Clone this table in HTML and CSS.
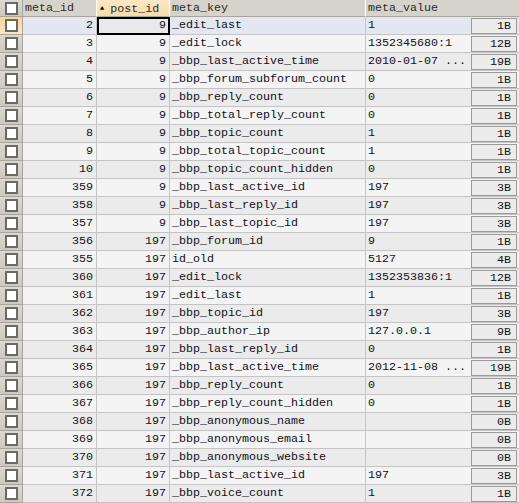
FILE: index.html
```html
<!DOCTYPE html>
<html>
<head>
<meta charset="utf-8">
<link rel="stylesheet" href="styles.css">
</head>
<body>
<div class="grid">
  <div class="row head">
    <div class="cb"><span class="box"></span></div>
    <div class="c">meta_id</div>
    <div class="c sorted"><span class="tri">&#9650;</span>post_id</div>
    <div class="c">meta_key</div>
    <div class="c">meta_value</div>
  </div>
  <div id="body"></div>
</div>
<script src="app.js"></script>
</body>
</html>
```

FILE: app.js
```js
const data = [
  [2,9,"_edit_last","1","1B"],
  [3,9,"_edit_lock","1352345680:1","12B"],
  [4,9,"_bbp_last_active_time","2010-01-07 ...","19B"],
  [5,9,"_bbp_forum_subforum_count","0","1B"],
  [6,9,"_bbp_reply_count","0","1B"],
  [7,9,"_bbp_total_reply_count","0","1B"],
  [8,9,"_bbp_topic_count","1","1B"],
  [9,9,"_bbp_total_topic_count","1","1B"],
  [10,9,"_bbp_topic_count_hidden","0","1B"],
  [359,9,"_bbp_last_active_id","197","3B"],
  [358,9,"_bbp_last_reply_id","197","3B"],
  [357,9,"_bbp_last_topic_id","197","3B"],
  [356,197,"_bbp_forum_id","9","1B"],
  [355,197,"id_old","5127","4B"],
  [360,197,"_edit_lock","1352353836:1","12B"],
  [361,197,"_edit_last","1","1B"],
  [362,197,"_bbp_topic_id","197","3B"],
  [363,197,"_bbp_author_ip","127.0.0.1","9B"],
  [364,197,"_bbp_last_reply_id","0","1B"],
  [365,197,"_bbp_last_active_time","2012-11-08 ...","19B"],
  [366,197,"_bbp_reply_count","0","1B"],
  [367,197,"_bbp_reply_count_hidden","0","1B"],
  [368,197,"_bbp_anonymous_name","","0B"],
  [369,197,"_bbp_anonymous_email","","0B"],
  [370,197,"_bbp_anonymous_website","","0B"],
  [371,197,"_bbp_last_active_id","197","3B"],
  [372,197,"_bbp_voice_count","1","1B"]
];
const body = document.getElementById("body");
data.forEach((r, i) => {
  const row = document.createElement("div");
  row.className = "row " + (i === 0 ? "sel" : (i % 2 ? "odd" : "even"));
  row.innerHTML =
    '<div class="cb"><span class="box"></span></div>' +
    '<div class="c num">' + r[0] + '</div>' +
    '<div class="c num' + (i === 0 ? ' focus' : '') + '">' + r[1] + '</div>' +
    '<div class="c">' + r[2] + '</div>' +
    '<div class="c val"><span class="vt">' + r[3] + '</span><span class="size">' + r[4] + '</span></div>';
  body.appendChild(row);
});
```

FILE: styles.css
```css
html, body {
  margin: 0;
  padding: 0;
  background: #ffffff;
}
.grid {
  width: 519px;
  font-family: "Liberation Mono", "DejaVu Sans Mono", monospace;
  font-size: 11.67px;
  color: #101020;
}
.row {
  display: grid;
  grid-template-columns: 23px 74px 73px 196px 153px;
  height: 18px;
}
.row.head {
  height: 17px;
  background: #d6d3ca;
}
.c {
  border-right: 1px solid #c4c4c4;
  border-bottom: 1px solid #c4c4c4;
  padding: 0 3px 0 2px;
  line-height: 17px;
  white-space: nowrap;
  overflow: hidden;
  position: relative;
}
.row.head .c {
  line-height: 16px;
  border-right: 1px solid #ffffff;
  border-bottom: 1px solid #a8a59c;
  color: #2a2a2a;
}
.row.head .c:last-child { border-right: none; }
.row.head .c.sorted {
  background: linear-gradient(#fbe8c6, #f7dcaa);
  padding-left: 3px;
}
.tri {
  font-size: 7px;
  vertical-align: 2px;
  margin-right: 6px;
  color: #000;
}
.c:last-child { border-right: none; }
.num { text-align: right; }
.cb {
  background: linear-gradient(#dcd9d0, #cdc9bf);
  border-right: 1px solid #a8a59c;
  border-bottom: 1px solid #a8a59c;
  display: flex;
  align-items: center;
  justify-content: center;
}
.row.head .cb { border-bottom: 1px solid #a8a59c; }
.row.sel .cb {
  background: linear-gradient(#f9d598, #fbe7c2);
}
.box {
  width: 9px;
  height: 9px;
  background: #ffffff;
  border: 2px solid #6a6a6a;
  margin-left: 1px;
}
.row.odd .c { background: #f4f4f4; }
.row.even .c { background: #ebebeb; }
.row.sel .c { background: #e4e7f1; }
.row.sel .c.focus {
  background: #e9e9e9;
  outline: 2px solid #000;
  outline-offset: -2px;
  z-index: 1;
}
.val {
  display: flex;
  align-items: center;
  padding-right: 2px;
}
.vt {
  flex: 1;
  overflow: hidden;
}
.size {
  width: 44px;
  height: 14px;
  line-height: 14px;
  text-align: right;
  padding-right: 5px;
  box-sizing: content-box;
  width: 39px;
  border: 1px solid #9a9a9a;
  background: #ececec;
}
```
